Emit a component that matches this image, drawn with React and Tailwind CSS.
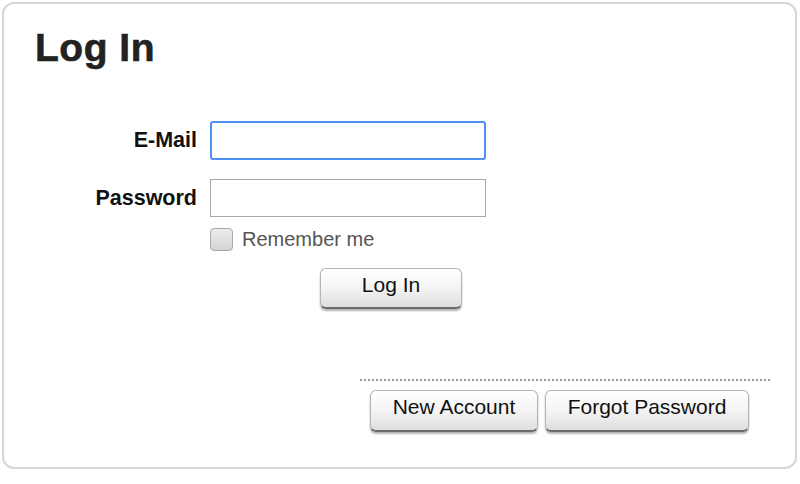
export default function App() {
  const btn =
    "flex items-center justify-center rounded-[6px] border border-[#b4b4b4] border-b-[2px] border-b-[#6a6a6a] bg-linear-to-b from-[#ffffff] via-[#f4f4f4] to-[#dedede] shadow-[0_2px_2px_rgba(0,0,0,0.3)] text-[21px] text-[#111] leading-none";
  return (
    <div className="w-[800px] h-[484px] bg-white p-[2px] font-['Liberation_Sans',Arial,sans-serif]">
      <div className="w-[795px] h-[467px] rounded-[12px] border-2 border-[#d6d6d6] bg-white flex flex-col">
        <h1 className="mt-[24px] ml-[31px] text-[39px] leading-[39px] font-bold text-[#222] tracking-[0.5px] [-webkit-text-stroke:0.6px_#222]">
          Log In
        </h1>
        <div className="mt-[54px] flex items-center gap-[13px]">
          <label className="w-[193px] text-right text-[21.5px] font-bold text-[#111]">E-Mail</label>
          <div className="w-[276px] h-[39px] rounded-[3px] border-2 border-[#4d8ff5] bg-white" />
        </div>
        <div className="mt-[19px] flex items-center gap-[13px]">
          <label className="w-[193px] text-right text-[21.5px] font-bold text-[#111]">Password</label>
          <div className="w-[276px] h-[38px] border border-[#a9a9a9] bg-white" />
        </div>
        <div className="mt-[7px] ml-[206px] flex items-center gap-[9px]">
          <div className="w-[23px] h-[23px] rounded-[4px] border border-[#a8a8a8] bg-linear-to-b from-[#ececec] to-[#d4d4d4]" />
          <span className="text-[20px] text-[#555]">Remember me</span>
        </div>
        <div className="mt-[14px] ml-[316px]">
          <div className={btn + " w-[142px] h-[41px] pb-[7px]"}>Log In</div>
        </div>
        <div className="mt-[70px] ml-[356px] w-[410px] border-t-2 border-dotted border-[#999]" />
        <div className="mt-[9px] ml-[366px] flex gap-[7px]">
          <div className={btn + " w-[168px] h-[42px] pb-[9px]"}>New Account</div>
          <div className={btn + " w-[204px] h-[42px] pb-[9px]"}>Forgot Password</div>
        </div>
      </div>
    </div>
  );
}
